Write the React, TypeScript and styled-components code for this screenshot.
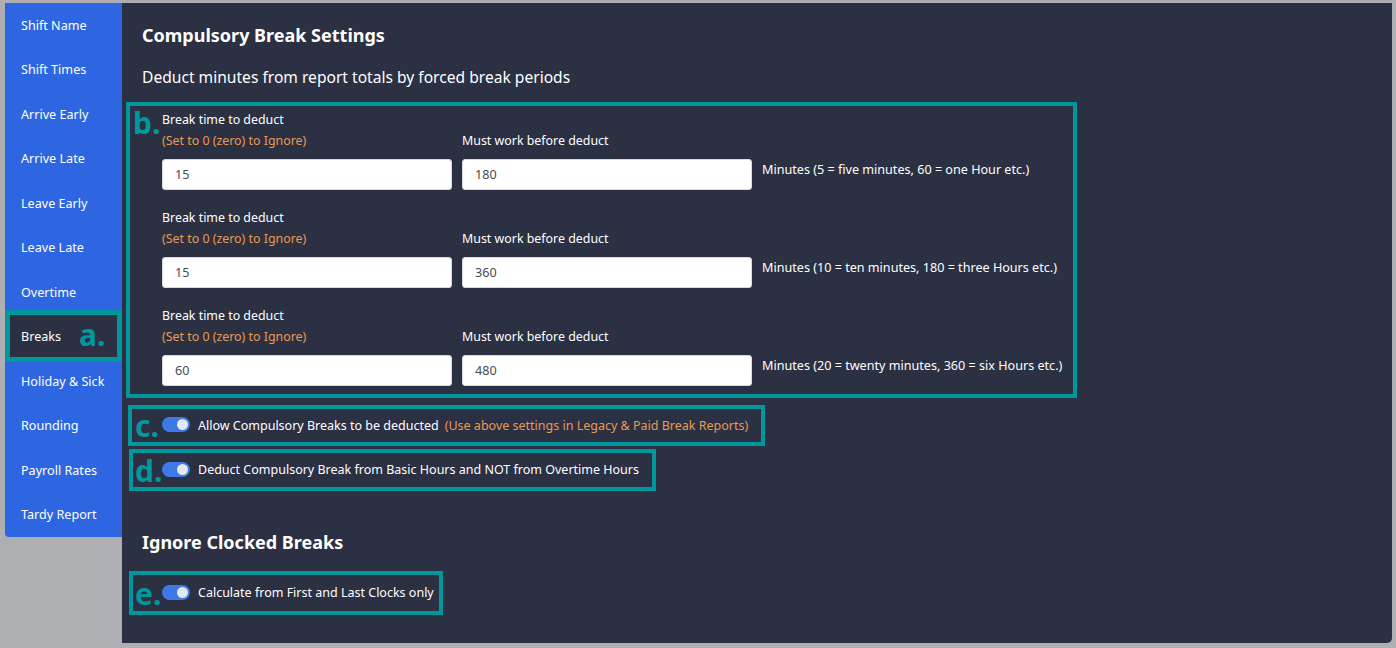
import React from "react";
import styled, { createGlobalStyle } from "styled-components";

const Global = createGlobalStyle`
  html, body { margin: 0; padding: 0; background: #adafb2; }
  body { font-family: "Noto Sans", "Open Sans", sans-serif; }
  * { box-sizing: border-box; }
`;

const TEAL = "#00979d";
const ORANGE = "#e99a50";

const Page = styled.div`
  display: flex;
  align-items: flex-start;
  padding: 3px 4px 5px 5px;
  width: 1396px;
  height: 648px;
`;

const Sidebar = styled.nav`
  width: 117px;
  flex: none;
  background: #2d66e0;
  border-radius: 0 0 0 4px;
  display: flex;
  flex-direction: column;
`;

const NavItem = styled.div<{ $active?: boolean }>`
  position: relative;
  height: 44.5px;
  display: flex;
  align-items: center;
  padding-left: 16px;
  color: #ffffff;
  font-size: 12.6px;
  background: ${(p) => (p.$active ? "#2b3043" : "transparent")};
`;

const ActiveFrame = styled.span`
  position: absolute;
  left: 0;
  right: 0;
  top: -5px;
  bottom: -3px;
  border: 5px solid ${TEAL};
  pointer-events: none;
`;

const Tag = styled.span<{ $size?: number }>`
  position: absolute;
  color: ${TEAL};
  font-family: "Noto Sans", sans-serif;
  font-weight: 700;
  font-size: ${(p) => p.$size ?? 30}px;
  line-height: 1;
`;

const Panel = styled.main`
  flex: 1;
  height: 640px;
  background: #2b3043;
  border-radius: 0 0 5px 0;
  padding: 19px 0 0 4px;
  color: #ffffff;
`;

const Heading = styled.h2<{ $mt?: number }>`
  margin: ${(p) => p.$mt ?? 0}px 0 0 16px;
  font-size: 18px;
  line-height: 26px;
  font-weight: 700;
`;

const Sub = styled.p`
  margin: 17px 0 13px 16px;
  font-size: 15.6px;
  line-height: 24px;
`;

const AnnotBox = styled.div<{ $w: number; $ml?: number; $mt?: number }>`
  position: relative;
  width: ${(p) => p.$w}px;
  margin: ${(p) => p.$mt ?? 0}px 0 0 ${(p) => p.$ml ?? 0}px;
  border: 4px solid ${TEAL};
`;

const BreakBox = styled(AnnotBox)`
  padding: 3px 0 8px 32px;
  display: flex;
  flex-direction: column;
  gap: 17.5px;
`;

const BreakRow = styled.div`
  display: grid;
  grid-template-columns: 290px 290px auto;
  column-gap: 10px;
  grid-template-rows: 21px 21px 38.5px;
  row-gap: 0;
`;

const Label = styled.div<{ $col: number; $row: number; $warn?: boolean }>`
  grid-column: ${(p) => p.$col};
  grid-row: ${(p) => p.$row};
  font-size: 12.4px;
  line-height: 21px;
  color: ${(p) => (p.$warn ? ORANGE : "#ffffff")};
  white-space: nowrap;
`;

const InputWrap = styled.div<{ $col: number }>`
  grid-column: ${(p) => p.$col};
  grid-row: 3;
  padding-top: 7.5px;
`;

const Input = styled.input`
  display: block;
  width: 100%;
  height: 31px;
  border: 1px solid #d6d9de;
  border-radius: 3px;
  background: #ffffff;
  padding: 0 12px;
  font-family: "Noto Sans", sans-serif;
  font-size: 12.6px;
  color: #444a52;
  outline: none;
`;

const Hint = styled.div`
  grid-column: 3;
  grid-row: 3;
  padding-top: 8px;
  font-size: 12.6px;
  line-height: 21px;
  white-space: nowrap;
`;

const ToggleBox = styled(AnnotBox)<{ $h: number }>`
  height: ${(p) => p.$h}px;
  display: flex;
  align-items: center;
  gap: 8px;
  padding-left: ${(p) => 30 - (p.$ml ?? 0) + 2}px;
  font-size: 12.5px;
  white-space: nowrap;
`;

const Switch = styled.span`
  position: relative;
  flex: none;
  width: 28px;
  height: 15px;
  border-radius: 8px;
  background: #3e7ae6;
  margin-top: -1px;
  &::after {
    content: "";
    position: absolute;
    right: 2px;
    top: 2px;
    width: 11px;
    height: 11px;
    border-radius: 50%;
    background: #e4e8f0;
  }
`;

const Note = styled.span`
  color: ${ORANGE};
  margin-left: 6px;
`;

const navItems = [
  "Shift Name",
  "Shift Times",
  "Arrive Early",
  "Arrive Late",
  "Leave Early",
  "Leave Late",
  "Overtime",
  "Breaks",
  "Holiday & Sick",
  "Rounding",
  "Payroll Rates",
  "Tardy Report",
];

const rows = [
  { a: "15", b: "180", hint: "Minutes (5 = five minutes, 60 = one Hour etc.)" },
  { a: "15", b: "360", hint: "Minutes (10 = ten minutes, 180 = three Hours etc.)" },
  { a: "60", b: "480", hint: "Minutes (20 = twenty minutes, 360 = six Hours etc.)" },
];

export default function App() {
  return (
    <>
      <Global />
      <Page>
        <Sidebar>
          {navItems.map((n) => (
            <NavItem key={n} $active={n === "Breaks"}>
              {n}
              {n === "Breaks" && (
                <>
                  <ActiveFrame />
                  <Tag $size={30} style={{ left: 74, top: 5 }}>a.</Tag>
                </>
              )}
            </NavItem>
          ))}
        </Sidebar>
        <Panel>
          <Heading>Compulsory Break Settings</Heading>
          <Sub>Deduct minutes from report totals by forced break periods</Sub>
          <BreakBox $w={951}>
            <Tag $size={30} style={{ left: 3, top: 2 }}>b.</Tag>
            {rows.map((r, i) => (
              <BreakRow key={i}>
                <Label $col={1} $row={1}>Break time to deduct</Label>
                <Label $col={1} $row={2} $warn>(Set to 0 (zero) to Ignore)</Label>
                <Label $col={2} $row={2}>Must work before deduct</Label>
                <InputWrap $col={1}>
                  <Input defaultValue={r.a} />
                </InputWrap>
                <InputWrap $col={2}>
                  <Input defaultValue={r.b} />
                </InputWrap>
                <Hint>{r.hint}</Hint>
              </BreakRow>
            ))}
          </BreakBox>
          <ToggleBox $w={637} $h={41} $ml={2} $mt={7}>
            <Tag $size={30} style={{ left: 3, top: 2 }}>c.</Tag>
            <Switch />
            <span>
              Allow Compulsory Breaks to be deducted
              <Note>(Use above settings in Legacy &amp; Paid Break Reports)</Note>
            </span>
          </ToggleBox>
          <ToggleBox $w={527} $h={42} $ml={3} $mt={3}>
            <Tag $size={30} style={{ left: 2, top: 3 }}>d.</Tag>
            <Switch />
            <span>Deduct Compulsory Break from Basic Hours and NOT from Overtime Hours</span>
          </ToggleBox>
          <Heading $mt={38}>Ignore Clocked Breaks</Heading>
          <ToggleBox $w={314} $h={44} $ml={3} $mt={16}>
            <Tag $size={30} style={{ left: 2, top: 4 }}>e.</Tag>
            <Switch />
            <span>Calculate from First and Last Clocks only</span>
          </ToggleBox>
        </Panel>
      </Page>
    </>
  );
}
